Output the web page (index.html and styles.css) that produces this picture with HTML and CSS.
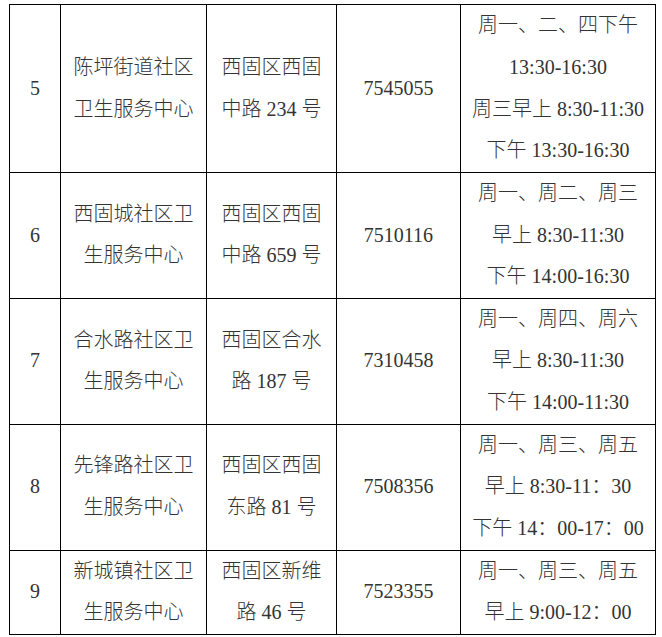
FILE: index.html
```html
<!DOCTYPE html>
<html lang="zh-CN">
<head>
<meta charset="utf-8">
<title>社区卫生服务中心</title>
<link rel="stylesheet" href="styles.css">
</head>
<body>
<table class="sheet">
  <colgroup>
    <col class="c-no">
    <col class="c-name">
    <col class="c-addr">
    <col class="c-tel">
    <col class="c-time">
  </colgroup>
  <tbody>
    <tr class="r4">
      <td>5</td>
      <td><div class="ln">陈坪街道社区</div><div class="ln">卫生服务中心</div></td>
      <td><div class="ln">西固区西固</div><div class="ln">中路 234 号</div></td>
      <td>7545055</td>
      <td><div class="ln">周一、二、四下午</div><div class="ln">13:30-16:30</div><div class="ln">周三早上 8:30-11:30</div><div class="ln">下午 13:30-16:30</div></td>
    </tr>
    <tr class="r3">
      <td>6</td>
      <td><div class="ln">西固城社区卫</div><div class="ln">生服务中心</div></td>
      <td><div class="ln">西固区西固</div><div class="ln">中路 659 号</div></td>
      <td>7510116</td>
      <td><div class="ln">周一、周二、周三</div><div class="ln">早上 8:30-11:30</div><div class="ln">下午 14:00-16:30</div></td>
    </tr>
    <tr class="r3">
      <td>7</td>
      <td><div class="ln">合水路社区卫</div><div class="ln">生服务中心</div></td>
      <td><div class="ln">西固区合水</div><div class="ln">路 187 号</div></td>
      <td>7310458</td>
      <td><div class="ln">周一、周四、周六</div><div class="ln">早上 8:30-11:30</div><div class="ln">下午 14:00-11:30</div></td>
    </tr>
    <tr class="r3b">
      <td>8</td>
      <td><div class="ln">先锋路社区卫</div><div class="ln">生服务中心</div></td>
      <td><div class="ln">西固区西固</div><div class="ln">东路 81 号</div></td>
      <td>7508356</td>
      <td><div class="ln">周一、周三、周五</div><div class="ln">早上 8:30-11：30</div><div class="ln">下午 14：00-17：00</div></td>
    </tr>
    <tr class="r2">
      <td>9</td>
      <td><div class="ln">新城镇社区卫</div><div class="ln">生服务中心</div></td>
      <td><div class="ln">西固区新维</div><div class="ln">路 46 号</div></td>
      <td>7523355</td>
      <td><div class="ln">周一、周三、周五</div><div class="ln">早上 9:00-12：00</div></td>
    </tr>
  </tbody>
</table>
</body>
</html>
```

FILE: styles.css
```css
html, body {
  background: #ffffff;
}

body {
  margin: 0;
  padding: 4px 0 0 9px;
  font-family: "Liberation Serif", "Noto Sans CJK SC", serif;
  font-size: 20px;
  font-weight: 300;
  color: #333333;
}

.sheet {
  border-collapse: collapse;
  table-layout: fixed;
  width: 647px;
}

.sheet td {
  border: 1px solid #000;
  padding: 0;
  text-align: center;
  vertical-align: middle;
  line-height: 41.6px;
  white-space: nowrap;
}

.c-no { width: 51px; }
.c-name { width: 146px; }
.c-addr { width: 130px; }
.c-tel { width: 124px; }
.c-time { width: 195px; }

.r4 { height: 168px; }
.r3 { height: 125px; }
.r3b { height: 126px; }
.r2 { height: 83px; }

.ln {
  display: block;
}
```
